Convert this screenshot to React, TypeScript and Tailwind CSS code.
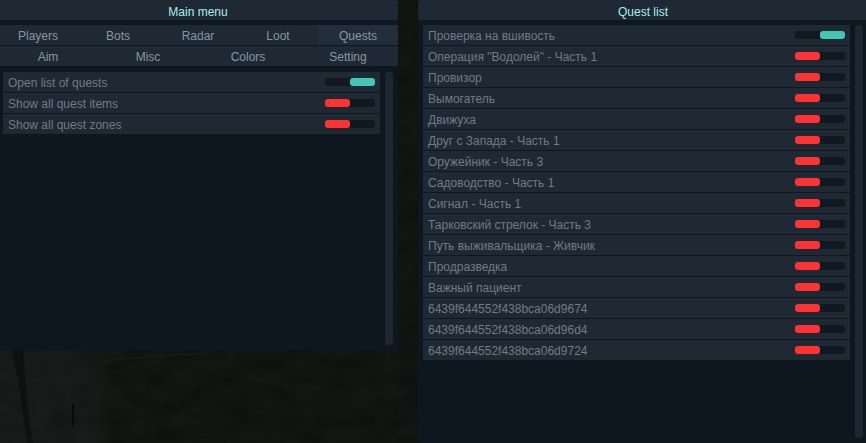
import React, { useState } from "react";

const tabRows = [
  ["Players", "Bots", "Radar", "Loot", "Quests"],
  ["Aim", "Misc", "Colors", "Setting"],
];

const options = [
  { label: "Open list of quests", on: true },
  { label: "Show all quest items", on: false },
  { label: "Show all quest zones", on: false },
];

const quests = [
  { label: "Проверка на вшивость", on: true },
  { label: 'Операция "Водолей" - Часть 1', on: false },
  { label: "Провизор", on: false },
  { label: "Вымогатель", on: false },
  { label: "Движуха", on: false },
  { label: "Друг с Запада - Часть 1", on: false },
  { label: "Оружейник - Часть 3", on: false },
  { label: "Садоводство - Часть 1", on: false },
  { label: "Сигнал - Часть 1", on: false },
  { label: "Тарковский стрелок - Часть 3", on: false },
  { label: "Путь выживальщика - Живчик", on: false },
  { label: "Продразведка", on: false },
  { label: "Важный пациент", on: false },
  { label: "6439f644552f438bca06d9674", on: false },
  { label: "6439f644552f438bca06d96d4", on: false },
  { label: "6439f644552f438bca06d9724", on: false },
];

type Item = { label: string; on: boolean };

const ToggleRow: React.FC<{ item: Item }> = ({ item }) => {
  return (
    <label className="flex h-5 items-center justify-between bg-[#1e2934] px-[5px] text-[#707b85]">
      <span className="pt-0.5">{item.label}</span>
      <input
        type="checkbox"
        defaultChecked={item.on}
        className="h-2 w-[50px] shrink-0 appearance-none rounded-[3px] bg-[#101821] before:block before:h-2 before:w-[25px] before:rounded-[3px] before:bg-[#ff3333] checked:before:ml-[25px] checked:before:bg-[#43c8b8]"
      />
    </label>
  );
};

const ToggleList: React.FC<{ items: Item[] }> = ({ items }) => {
  return (
    <div className="flex grow gap-[5px] p-[5px]">
      <div className="flex grow flex-col gap-px">
        {items.map((item) => (
          <ToggleRow key={item.label} item={item} />
        ))}
      </div>
      {/* scrollbar */}
      <div className="w-2 rounded-[3px] bg-[#1d2731]" />
    </div>
  );
};

const PanelTitle: React.FC<{ title: string }> = ({ title }) => {
  return (
    <h2 className="flex h-5 items-center justify-center rounded-[3px] bg-[#1e2934] pt-1 text-[#a9efea]">
      {title}
    </h2>
  );
};

// dim concrete wall behind the panels
const Wall = () => {
  return (
    <svg className="absolute inset-0 -z-10 h-full w-full" aria-hidden="true">
      <defs>
        <filter id="grain" x="0" y="0" width="100%" height="100%">
          <feTurbulence type="fractalNoise" baseFrequency="0.04 0.07" numOctaves="5" seed="4" />
          <feColorMatrix values="0 0 0 0 0.16  0 0 0 0 0.18  0 0 0 0 0.16  0.5 0 0 0 -0.1" />
        </filter>
        <linearGradient id="shade">
          <stop offset="0" stopColor="#151816" />
          <stop offset="0.11" stopColor="#141715" />
          <stop offset="0.13" stopColor="#0f110f" />
          <stop offset="1" stopColor="#10110f" />
        </linearGradient>
      </defs>
      <rect width="100%" height="100%" fill="url(#shade)" />
      <rect width="100%" height="100%" filter="url(#grain)" opacity="0.2" />
      <path d="M12 350 L18 380 L27 443 H33 L27 400 L23 350Z" fill="#0a0b0a" opacity="0.6" />
      <path d="M100 361 L160 356 L210 353" stroke="#1b1e1b" fill="none" />
      <path d="M66 394 L73 402" stroke="#20231f" fill="none" />
      <path d="M73 403 V426" stroke="#0a0b0a" strokeWidth="2" fill="none" />
    </svg>
  );
};

const App: React.FC = () => {
  const [active, setActive] = useState("Quests");

  return (
    <main className="relative isolate min-h-screen overflow-hidden bg-[#0e0f0d] font-['Liberation_Sans',Arial,sans-serif] text-xs leading-5">
      <Wall />
      <div className="-mx-0.5 flex min-h-screen gap-5">
        <section className="flex min-h-[350px] flex-[8] flex-col self-start rounded-[3px] bg-[#0e161f]">
          <PanelTitle title="Main menu" />
          <nav className="mt-[5px] mb-px flex flex-col gap-px">
            {tabRows.map((tabs) => (
              <div key={tabs[0]} className="flex">
                {tabs.map((tab) => (
                  <button
                    key={tab}
                    type="button"
                    onClick={() => setActive(tab)}
                    className={`flex h-5 flex-1 items-center justify-center pt-0.5 text-[#8797a4] ${
                      tab === active ? "bg-[#222e3b]" : "bg-[#1e2934]"
                    }`}
                  >
                    {tab}
                  </button>
                ))}
              </div>
            ))}
          </nav>
          <ToggleList items={options} />
        </section>

        <section className="flex flex-[9] flex-col rounded-[3px] bg-[#0e161f]">
          <PanelTitle title="Quest list" />
          <ToggleList items={quests} />
        </section>
      </div>
    </main>
  );
};

export default App;
